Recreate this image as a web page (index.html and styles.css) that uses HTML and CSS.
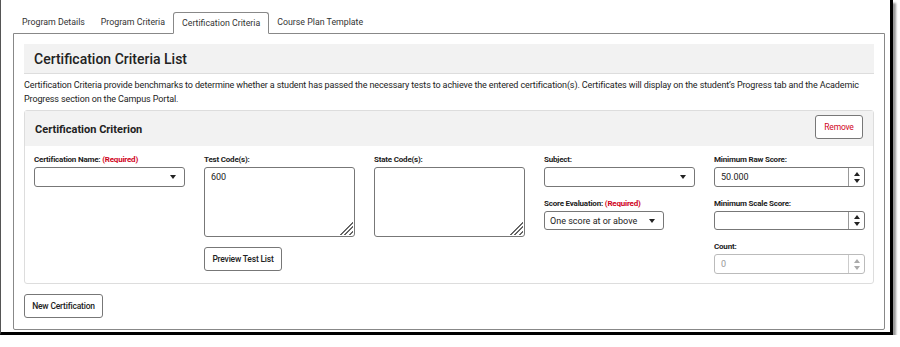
FILE: index.html
```html
<!DOCTYPE html>
<html lang="en">

<head>
    <meta charset="UTF-8">
    <title>Certification Criteria</title>
    <link rel="stylesheet" href="styles.css">
</head>

<body>
    <div class="frame">
        <ul class="tabs">
            <li>Program Details</li>
            <li>Program Criteria</li>
            <li class="active">Certification Criteria</li>
            <li>Course Plan Template</li>
        </ul>
        <div class="panel">
            <div class="list_head">Certification Criteria List</div>
            <p class="desc">Certification Criteria provide benchmarks to determine whether a student has passed the necessary tests to achieve the entered certification(s). Certificates will display on the student’s Progress tab and the Academic Progress section on the Campus Portal.</p>

            <div class="card">
                <div class="card_head">
                    <span>Certification Criterion</span>
                    <a href="javascript:;" class="btn btn_red">Remove</a>
                </div>
                <div class="card_body">
                    <div class="col">
                        <label>Certification Name: <em>(Required)</em></label>
                        <div class="select"><span></span><i class="caret"></i></div>
                    </div>
                    <div class="col">
                        <label>Test Code(s):</label>
                        <div class="area">600<i class="grip"></i></div>
                        <a href="javascript:;" class="btn btn_preview">Preview Test List</a>
                    </div>
                    <div class="col">
                        <label>State Code(s):</label>
                        <div class="area"><i class="grip"></i></div>
                    </div>
                    <div class="col">
                        <label>Subject:</label>
                        <div class="select"><span></span><i class="caret"></i></div>
                        <label class="gap">Score Evaluation: <em>(Required)</em></label>
                        <div class="select select_sm"><span>One score at or above</span><i class="caret"></i></div>
                    </div>
                    <div class="col">
                        <label>Minimum Raw Score:</label>
                        <div class="num"><span>50.000</span><b class="spin"><i class="up"></i><i class="down"></i></b></div>
                        <label class="gap">Minimum Scale Score:</label>
                        <div class="num num_sm"><span></span><b class="spin"><i class="up"></i><i class="down"></i></b></div>
                        <label class="gap">Count:</label>
                        <div class="num num_off"><span>0</span><b class="spin"><i class="up"></i><i class="down"></i></b></div>
                    </div>
                </div>
            </div>

            <a href="javascript:;" class="btn btn_new">New Certification</a>
        </div>
    </div>
</body>

</html>
```

FILE: styles.css
```css
* {
    padding: 0;
    margin: 0;
    box-sizing: border-box;
}

body {
    font-family: Roboto, "Liberation Sans", sans-serif;
    color: #222;
    background-color: #fff;
}

a {
    text-decoration: none;
    color: #222;
}

em {
    font-style: normal;
    color: #d0021b;
}

.frame {
    width: 893px;
    height: 335px;
    padding: 12px 5px 0 12px;
    border-left: 1px solid #555;
    border-right: 3px solid #000;
    border-bottom: 3px solid #000;
    box-shadow: 3px 3px 2px #999;
}

.tabs {
    display: flex;
    list-style: none;
    height: 22px;
    padding-left: 1px;
}

.tabs li {
    padding: 0 8px;
    font-size: 8.8px;
    line-height: 21px;
    color: #333;
}

.tabs .active {
    border: 1px solid #888;
    border-bottom: 1px solid #fff;
    border-radius: 3px 3px 0 0;
    background-color: #fff;
    position: relative;
    z-index: 2;
    height: 22px;
}

.panel {
    width: 872px;
    height: 297px;
    margin-top: -1px;
    padding: 10px;
    border: 1px solid #888;
    border-radius: 0 0 2px 2px;
}

.list_head {
    height: 30px;
    padding-left: 10px;
    background-color: #f2f2f2;
    border-bottom: 1px solid #ddd;
    font-size: 14px;
    font-weight: 500;
    line-height: 30px;
    color: #222;
}

.desc {
    padding-top: 4px;
    font-size: 9px;
    line-height: 14px;
    color: #222;
    letter-spacing: -0.12px;
}

.card {
    margin-top: 4px;
    height: 174px;
    border: 1px solid #ddd;
    border-radius: 3px;
}

.card_head {
    display: flex;
    align-items: flex-start;
    justify-content: space-between;
    height: 35px;
    padding: 4px 10px 0 10px;
    background-color: #f2f2f2;
    font-size: 11px;
    font-weight: 700;
    line-height: 30px;
    color: #222;
}

.card_body {
    display: flex;
    gap: 19px;
    padding: 9px 10px 0 9px;
}

.col {
    width: 151px;
    display: flex;
    flex-direction: column;
    align-items: flex-start;
}

label {
    font-size: 8px;
    font-weight: 700;
    color: #222;
    line-height: 9px;
    height: 12px;
    letter-spacing: -0.2px;
}

.gap {
    margin-top: 12px;
}

.select,
.num {
    display: flex;
    align-items: center;
    width: 151px;
    height: 20px;
    border: 1px solid #777;
    border-radius: 3px;
    font-size: 9px;
    color: #222;
}

.select span {
    flex: 1;
    padding-left: 5px;
}

.select_sm {
    width: 120px;
    height: 19px;
}

.num_sm {
    height: 19px;
}

.caret {
    width: 0;
    height: 0;
    margin-right: 8px;
    border-left: 3px solid transparent;
    border-right: 3px solid transparent;
    border-top: 4px solid #222;
}

.area {
    position: relative;
    width: 151px;
    height: 70px;
    padding: 4px 6px;
    border: 1px solid #777;
    border-radius: 3px;
    font-size: 9px;
    color: #222;
}

.grip {
    position: absolute;
    right: 1px;
    bottom: 1px;
    width: 15px;
    height: 15px;
    background: repeating-linear-gradient(135deg, transparent 0, transparent 2px, #666 2px, #666 3.2px);
    clip-path: polygon(100% 0, 100% 100%, 0 100%);
}

.num span {
    flex: 1;
    padding-left: 6px;
}

.spin {
    display: flex;
    flex-direction: column;
    justify-content: center;
    align-items: center;
    gap: 3px;
    width: 16px;
    height: 100%;
    border-left: 1px solid #999;
}

.spin .up {
    border-left: 3px solid transparent;
    border-right: 3px solid transparent;
    border-bottom: 4px solid #222;
}

.spin .down {
    border-left: 3px solid transparent;
    border-right: 3px solid transparent;
    border-top: 4px solid #222;
}

.num_off {
    border-color: #bbb;
    color: #999;
}

.num_off .spin {
    border-left-color: #ccc;
}

.num_off .up {
    border-bottom-color: #aaa;
}

.num_off .down {
    border-top-color: #aaa;
}

.btn {
    display: inline-block;
    height: 24px;
    border: 1px solid #777;
    border-radius: 3px;
    background-color: #fff;
    font-size: 8.5px;
    font-weight: 500;
    line-height: 22px;
    letter-spacing: -0.2px;
    text-align: center;
}

.btn_red {
    width: 48px;
    color: #d0021b;
    font-weight: 400;
}

.btn_preview {
    margin-top: 10px;
    width: 78px;
}

.btn_new {
    margin-top: 10px;
    width: 79px;
}
```
